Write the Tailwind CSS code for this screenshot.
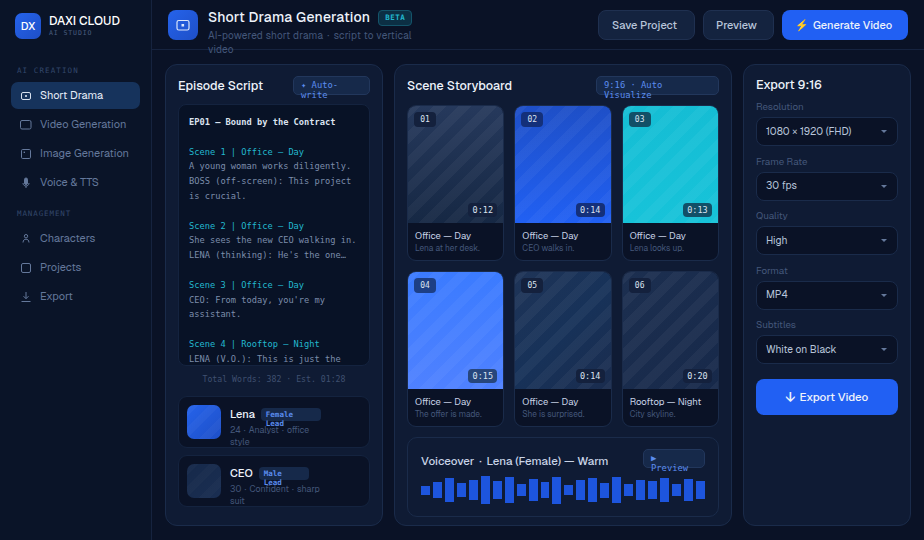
<!DOCTYPE html>
<html><head><meta charset="utf-8">
<script src="https://cdn.jsdelivr.net/npm/@tailwindcss/browser@4"></script>
</head>
<body class="m-0 bg-[#0a1226]">
<div class="w-[924px] h-[540px] overflow-hidden flex font-['Geist','Noto_Sans_CJK_SC',sans-serif] text-[#e6edf8] bg-[#0a1226]">
  <aside class="w-[152px] shrink-0 h-full bg-[#0a1428] border-r border-[#16233f] px-[11px] flex flex-col">
    <div class="flex gap-2 pl-1 pt-[13px] h-[50px] items-start">
      <div class="w-[26px] h-[26px] rounded-[7px] bg-gradient-to-br from-[#2563eb] to-[#1e4fc7] flex items-center justify-center text-[11px] font-medium text-white">DX</div>
      <div class="flex flex-col">
        <span class="text-[12px] leading-[14px] font-medium text-white mt-[1px]">DAXI CLOUD</span>
        <span class="font-['DejaVu_Sans_Mono',monospace] text-[6.5px] leading-[10px] tracking-[0.9px] text-[#4b5f80]">AI STUDIO</span>
      </div>
    </div>
    <div class="font-['DejaVu_Sans_Mono',monospace] text-[7.5px] leading-[10px] tracking-[1.1px] text-[#33476b] pl-[6px] mt-[16px] mb-[6px]">AI CREATION</div>
    <nav class="flex flex-col gap-[2px]">
      <div class="h-[27px] rounded-[7px] bg-[#16335c] flex items-center gap-[8px] px-[9px] text-[11px] text-[#e6edf8] whitespace-nowrap">
        <svg class="w-[12px] h-[12px] shrink-0 text-[#d7e0ee]" viewBox="0 0 12 12" fill="none" stroke="currentColor" stroke-width="1"><rect x="1.5" y="2.5" width="9" height="7" rx="1.5"/><rect x="5" y="5.2" width="2" height="1.6" fill="currentColor" stroke="none"/></svg>
        <span>Short Drama</span></div>
      <div class="h-[27px] rounded-[7px] flex items-center gap-[8px] px-[9px] text-[11px] text-[#64789b] whitespace-nowrap">
        <svg class="w-[12px] h-[12px] shrink-0" viewBox="0 0 12 12" fill="none" stroke="currentColor" stroke-width="1"><rect x="0.5" y="1.5" width="10.5" height="8.500" rx="1.5"/></svg>
        <span>Video Generation</span></div>
      <div class="h-[27px] rounded-[7px] flex items-center gap-[8px] px-[9px] text-[11px] text-[#64789b] whitespace-nowrap">
        <svg class="w-[12px] h-[12px] shrink-0" viewBox="0 0 12 12" fill="none" stroke="currentColor" stroke-width="1"><rect x="1.5" y="1.5" width="9" height="9" rx="1.2"/><rect x="3.6" y="3.6" width="1.4" height="1.4" fill="currentColor" stroke="none"/></svg>
        <span>Image Generation</span></div>
      <div class="h-[27px] rounded-[7px] flex items-center gap-[8px] px-[9px] text-[11px] text-[#64789b] whitespace-nowrap">
        <svg class="w-[12px] h-[12px] shrink-0" viewBox="0 0 12 12" fill="none" stroke="currentColor" stroke-width="1"><rect x="4.5" y="1" width="3" height="6.5" rx="1.5" fill="currentColor"/><path d="M3 6c0 4 6 4 6 0M6 9v2"/></svg>
        <span>Voice &amp; TTS</span></div>
    </nav>
    <div class="font-['DejaVu_Sans_Mono',monospace] text-[7.5px] leading-[10px] tracking-[0.9px] text-[#33476b] pl-[6px] mt-[13px] mb-[6px]">MANAGEMENT</div>
    <nav class="flex flex-col gap-[2px]">
      <div class="h-[27px] rounded-[7px] flex items-center gap-[8px] px-[9px] text-[11px] text-[#64789b]">
        <svg class="w-[12px] h-[12px] shrink-0" viewBox="0 0 12 12" fill="none" stroke="currentColor" stroke-width="1"><circle cx="6" cy="3.200" r="1.700"/><path d="M3 9.500c.2-2.400 1.300-3.300 3-3.300s2.800.9 3 3.300"/></svg>
        <span>Characters</span></div>
      <div class="h-[27px] rounded-[7px] flex items-center gap-[8px] px-[9px] text-[11px] text-[#64789b]">
        <svg class="w-[12px] h-[12px] shrink-0" viewBox="0 0 12 12" fill="none" stroke="currentColor" stroke-width="1"><rect x="1.500" y="1.500" width="9" height="9" rx="1.500"/></svg>
        <span>Projects</span></div>
      <div class="h-[27px] rounded-[7px] flex items-center gap-[8px] px-[9px] text-[11px] text-[#64789b]">
        <svg class="w-[12px] h-[12px] shrink-0" viewBox="0 0 12 12" fill="none" stroke="currentColor" stroke-width="1"><path d="M6 1v6.500M3.500 5.200 6 7.700l2.500-2.500M1.500 10.500h9"/></svg>
        <span>Export</span></div>
    </nav>
  </aside>
  <div class="flex-1 min-w-0 flex flex-col">
    <header class="h-[50px] shrink-0 border-b border-[#16233f] pl-[16px] pr-[16px] flex items-center">
      <div class="w-[30px] h-[30px] rounded-[8px] bg-gradient-to-br from-[#2563eb] to-[#1e4fc7] flex items-center justify-center shrink-0">
        <svg class="w-[16px] h-[16px] text-[#dbe6fb]" viewBox="0 0 16 16" fill="none" stroke="currentColor" stroke-width="1.200"><rect x="2" y="3.500" width="12" height="9.500" rx="1.800"/><rect x="6.500" y="7" width="2.600" height="2.500" fill="currentColor" stroke="none"/></svg>
      </div>
      <div class="ml-[10px] w-[218px] h-[30px] flex flex-col">
        <div class="flex items-center h-[16px]">
          <span class="text-[14px] font-medium tracking-[0.22px] text-[#eef3fb] whitespace-nowrap">Short Drama Generation</span>
          <span class="ml-[8px] h-[16px] px-[6px] rounded-[4px] bg-[#0c2f44] border border-[#14546a] font-['DejaVu_Sans_Mono',monospace] font-bold text-[7.5px] leading-[14px] tracking-[0.5px] text-[#22b8cf]">BETA</span>
        </div>
        <p class="mt-[3px] text-[10px] leading-[14px] tracking-[0.2px] text-[#44577a]">AI-powered short drama <span class="mx-[1.5px]">·</span> script to vertical video</p>
      </div>
      <div class="ml-auto flex gap-[8px]">
        <div class="w-[97px] h-[30px] rounded-[8px] bg-[#14233f] border border-[#1f3050] pt-[1px] pr-[4px] flex items-center justify-center text-[11px] font-medium text-[#b8c5da]">Save Project</div>
        <div class="w-[71px] h-[30px] rounded-[8px] bg-[#14233f] border border-[#1f3050] pt-[1px] pr-[4px] flex items-center justify-center text-[11px] font-medium text-[#b8c5da]">Preview</div>
        <div class="w-[126px] h-[30px] rounded-[8px] bg-[#2160f3] pt-[1px] pr-[3px] flex items-center justify-center gap-[4px] text-[11px] font-medium text-[#eef3fb]"><span class="text-[#d9a93a] text-[11px]">⚡</span><span>Generate Video</span></div>
      </div>
    </header>
    <main class="flex-1 min-h-0 pt-[14px] pl-[13px] pr-[13px] pb-[14px] grid grid-cols-[218px_338px_168px] gap-[11px] h-[490px]">
      <section class="rounded-[12px] bg-[#0f1b34] border border-[#1a2b4a] px-[12px] flex flex-col">
        <div class="flex items-center justify-between h-[39px] pt-[2px] shrink-0">
          <h2 class="text-[12.5px] font-medium text-[#eef3fb] mt-[2px]">Episode Script</h2>
          <div class="w-[77px] h-[19px] rounded-[5px] bg-[#16294a] border border-[#22375c] px-[7px] font-['DejaVu_Sans_Mono',monospace] text-[8.8px] leading-[10px] pt-[3px] text-[#5b8def]">✦ Auto-write</div>
        </div>
        <div class="h-[262px] shrink-0 rounded-[8px] bg-[#081226] border border-[#14233f] overflow-hidden pl-[10px] pt-[10px] pr-[4px] font-['DejaVu_Sans_Mono',monospace] text-[8.7px] leading-[14.8px] text-[#7c8dab] whitespace-pre-wrap"><div class="font-bold text-[#dbe3f0]">EP01 — Bound by the Contract</div>
<div class="text-[#22b8cf]">Scene 1 | Office — Day</div><div>A young woman works diligently.
BOSS (off-screen): This project is crucial.</div>
<div class="text-[#22b8cf]">Scene 2 | Office — Day</div><div>She sees the new CEO walking in.
LENA (thinking): He's the one…</div>
<div class="text-[#22b8cf]">Scene 3 | Office — Day</div><div>CEO: From today, you're my assistant.</div>
<div class="text-[#22b8cf]">Scene 4 | Rooftop — Night</div><div>LENA (V.O.): This is just the beginning.</div></div>
        <div class="text-center font-['DejaVu_Sans_Mono',monospace] text-[8.2px] leading-[12px] text-[#3f5070] mt-[7px]">Total Words: 382 · Est. 01:28</div>
        <div class="mt-[11px] h-[52px] rounded-[9px] bg-[#0a1226] border border-[#14233f] flex items-start pt-[8px] pl-[8px]">
          <div class="w-[34px] h-[34px] rounded-[7px] shrink-0 bg-[repeating-linear-gradient(135deg,rgba(255,255,255,0.03)_0_8px,transparent_8px_16px),linear-gradient(135deg,#2563eb,#1e4fc7)]"></div>
          <div class="ml-[9px] mt-[2px] w-[92px]">
            <div class="flex items-center h-[14px]"><span class="text-[11px] font-medium text-[#eef3fb] shrink-0">Lena</span><span class="ml-[6px] shrink-0 w-[60px] h-[13px] rounded-[4px] bg-[#16294a] pl-[5px] pr-[12px] font-['DejaVu_Sans_Mono',monospace] font-bold text-[7.5px] leading-[9px] pt-[2px] text-[#5b8def]">Female Lead</span></div>
            <div class="mt-[3px] text-[8.8px] leading-[12px] text-[#44577a]">24 <span class="mx-[1px]">·</span> Analyst <span class="mx-[1px]">·</span> office style</div>
          </div>
        </div>
        <div class="mt-[7px] h-[52px] rounded-[9px] bg-[#0a1226] border border-[#14233f] flex items-start pt-[8px] pl-[8px]">
          <div class="w-[34px] h-[34px] rounded-[7px] shrink-0 bg-[repeating-linear-gradient(135deg,rgba(255,255,255,0.02)_0_8px,transparent_8px_16px),linear-gradient(135deg,#16294a,#1a2e52)]"></div>
          <div class="ml-[9px] mt-[2px] w-[92px]">
            <div class="flex items-center h-[14px]"><span class="text-[11px] font-medium text-[#eef3fb] shrink-0">CEO</span><span class="ml-[6px] shrink-0 w-[50px] h-[13px] rounded-[4px] bg-[#16294a] pl-[5px] pr-[12px] font-['DejaVu_Sans_Mono',monospace] font-bold text-[7.5px] leading-[9px] pt-[2px] text-[#5b8def]">Male Lead</span></div>
            <div class="mt-[3px] text-[8.8px] leading-[12px] text-[#44577a]">30 <span class="mx-[1px]">·</span> Confident <span class="mx-[1px]">·</span> sharp suit</div>
          </div>
        </div>
      </section>
      <section class="rounded-[12px] bg-[#0f1b34] border border-[#1a2b4a] px-[12px] flex flex-col">
        <div class="flex items-center justify-between h-[40px] pt-[1px] pb-[1px] shrink-0">
          <h2 class="text-[12.5px] font-medium text-[#eef3fb] mt-[2px]">Scene Storyboard</h2>
          <div class="w-[123px] h-[19px] rounded-[5px] bg-[#16294a] border border-[#22375c] px-[7px] font-['DejaVu_Sans_Mono',monospace] text-[8.8px] leading-[10px] pt-[3px] text-[#5b8def]">9:16 · Auto Visualize</div>
        </div>
        <div class="grid grid-cols-3 gap-x-[10px] gap-y-[10px]">
          <div class="h-[156px] rounded-[9px] border border-[#1a2b4a] bg-[#0a1226] overflow-hidden flex flex-col">
            <div class="relative h-[117px] bg-[repeating-linear-gradient(135deg,rgba(255,255,255,0.04)_0_9px,transparent_9px_18px),linear-gradient(180deg,#26395c,#162844)]">
              <span class="absolute left-[6px] top-[6px] w-[22px] h-[15px] rounded-[4px] bg-[#14213d] text-center font-['DejaVu_Sans_Mono',monospace] text-[8px] leading-[15px] text-[#dbe3f0]">01</span>
              <span class="absolute right-[6px] bottom-[6px] w-[29px] h-[14px] rounded-[4px] bg-[#14213d] text-center font-['DejaVu_Sans_Mono',monospace] text-[8.500px] leading-[14px] text-[#dbe3f0]">0:12</span>
            </div>
            <div class="pl-[7px] pt-[6px]"><div class="text-[9.500px] leading-[13px] text-[#c8d3e6]">Office — Day</div><div class="text-[8.300px] leading-[11px] mt-[1px] text-[#44577a]">Lena at her desk.</div></div>
          </div>
          <div class="h-[156px] rounded-[9px] border border-[#1a2b4a] bg-[#0a1226] overflow-hidden flex flex-col">
            <div class="relative h-[117px] bg-[repeating-linear-gradient(135deg,rgba(255,255,255,0.04)_0_9px,transparent_9px_18px),linear-gradient(180deg,#1e4fc7,#2160f3)]">
              <span class="absolute left-[6px] top-[6px] w-[22px] h-[15px] rounded-[4px] bg-[#14307a] text-center font-['DejaVu_Sans_Mono',monospace] text-[8px] leading-[15px] text-[#dbe3f0]">02</span>
              <span class="absolute right-[6px] bottom-[6px] w-[29px] h-[14px] rounded-[4px] bg-[#14307a] text-center font-['DejaVu_Sans_Mono',monospace] text-[8.500px] leading-[14px] text-[#dbe3f0]">0:14</span>
            </div>
            <div class="pl-[7px] pt-[6px]"><div class="text-[9.500px] leading-[13px] text-[#c8d3e6]">Office — Day</div><div class="text-[8.300px] leading-[11px] mt-[1px] text-[#44577a]">CEO walks in.</div></div>
          </div>
          <div class="h-[156px] rounded-[9px] border border-[#1a2b4a] bg-[#0a1226] overflow-hidden flex flex-col">
            <div class="relative h-[117px] bg-[repeating-linear-gradient(135deg,rgba(255,255,255,0.04)_0_9px,transparent_9px_18px),linear-gradient(180deg,#15bdd4,#17c3d9)]">
              <span class="absolute left-[6px] top-[6px] w-[22px] h-[15px] rounded-[4px] bg-[#125068] text-center font-['DejaVu_Sans_Mono',monospace] text-[8px] leading-[15px] text-[#dbe3f0]">03</span>
              <span class="absolute right-[6px] bottom-[6px] w-[29px] h-[14px] rounded-[4px] bg-[#125068] text-center font-['DejaVu_Sans_Mono',monospace] text-[8.500px] leading-[14px] text-[#dbe3f0]">0:13</span>
            </div>
            <div class="pl-[7px] pt-[6px]"><div class="text-[9.500px] leading-[13px] text-[#c8d3e6]">Office — Day</div><div class="text-[8.300px] leading-[11px] mt-[1px] text-[#44577a]">Lena looks up.</div></div>
          </div>
          <div class="h-[156px] rounded-[9px] border border-[#1a2b4a] bg-[#0a1226] overflow-hidden flex flex-col">
            <div class="relative h-[117px] bg-[repeating-linear-gradient(135deg,rgba(255,255,255,0.04)_0_9px,transparent_9px_18px),linear-gradient(180deg,#3b7bff,#4f81ff)]">
              <span class="absolute left-[6px] top-[6px] w-[22px] h-[15px] rounded-[4px] bg-[#1d3f85] text-center font-['DejaVu_Sans_Mono',monospace] text-[8px] leading-[15px] text-[#dbe3f0]">04</span>
              <span class="absolute right-[6px] bottom-[6px] w-[29px] h-[14px] rounded-[4px] bg-[#27467c] text-center font-['DejaVu_Sans_Mono',monospace] text-[8.500px] leading-[14px] text-[#dbe3f0]">0:15</span>
            </div>
            <div class="pl-[7px] pt-[6px]"><div class="text-[9.500px] leading-[13px] text-[#c8d3e6]">Office — Day</div><div class="text-[8.300px] leading-[11px] mt-[1px] text-[#44577a]">The offer is made.</div></div>
          </div>
          <div class="h-[156px] rounded-[9px] border border-[#1a2b4a] bg-[#0a1226] overflow-hidden flex flex-col">
            <div class="relative h-[117px] bg-[repeating-linear-gradient(135deg,rgba(255,255,255,0.04)_0_9px,transparent_9px_18px),linear-gradient(135deg,#1f3457,#173259_50%,#1a2c4e)]">
              <span class="absolute left-[6px] top-[6px] w-[22px] h-[15px] rounded-[4px] bg-[#14213d] text-center font-['DejaVu_Sans_Mono',monospace] text-[8px] leading-[15px] text-[#dbe3f0]">05</span>
              <span class="absolute right-[6px] bottom-[6px] w-[29px] h-[14px] rounded-[4px] bg-[#14213d] text-center font-['DejaVu_Sans_Mono',monospace] text-[8.500px] leading-[14px] text-[#dbe3f0]">0:14</span>
            </div>
            <div class="pl-[7px] pt-[6px]"><div class="text-[9.500px] leading-[13px] text-[#c8d3e6]">Office — Day</div><div class="text-[8.300px] leading-[11px] mt-[1px] text-[#44577a]">She is surprised.</div></div>
          </div>
          <div class="h-[156px] rounded-[9px] border border-[#1a2b4a] bg-[#0a1226] overflow-hidden flex flex-col">
            <div class="relative h-[117px] bg-[repeating-linear-gradient(135deg,rgba(255,255,255,0.04)_0_9px,transparent_9px_18px),linear-gradient(135deg,#1c2f50,#17294a)]">
              <span class="absolute left-[6px] top-[6px] w-[22px] h-[15px] rounded-[4px] bg-[#14213d] text-center font-['DejaVu_Sans_Mono',monospace] text-[8px] leading-[15px] text-[#dbe3f0]">06</span>
              <span class="absolute right-[6px] bottom-[6px] w-[29px] h-[14px] rounded-[4px] bg-[#14213d] text-center font-['DejaVu_Sans_Mono',monospace] text-[8.500px] leading-[14px] text-[#dbe3f0]">0:20</span>
            </div>
            <div class="pl-[7px] pt-[6px]"><div class="text-[9.500px] leading-[13px] text-[#c8d3e6]">Rooftop — Night</div><div class="text-[8.300px] leading-[11px] mt-[1px] text-[#44577a]">City skyline.</div></div>
          </div>
        </div>
        <div class="mt-[10px] h-[80px] rounded-[10px] bg-[#0f1b34] border border-[#1a2b4a] px-[13px] pt-[11px]">
          <div class="flex items-center justify-between h-[19px]">
            <span class="text-[11.5px] font-medium text-[#c8d3e6] mt-[4px]">Voiceover <span class="mx-[2px]">·</span> Lena (Female) — Warm</span>
            <div class="w-[62px] h-[19px] rounded-[5px] bg-[#16294a] border border-[#22375c] px-[7px] font-['DejaVu_Sans_Mono',monospace] text-[8.800px] leading-[10px] pt-[3px] text-[#5b8def]">▶ Preview</div>
          </div>
          <div class="mt-[8px] flex items-center gap-[3px] h-[28px]">
            <i class="block w-[9px] h-[9px] bg-[#1d55dd]"></i><i class="block w-[9px] h-[16px] bg-[#1d55dd]"></i><i class="block w-[9px] h-[24px] bg-[#1d55dd]"></i><i class="block w-[9px] h-[14px] bg-[#1d55dd]"></i><i class="block w-[9px] h-[20px] bg-[#1d55dd]"></i><i class="block w-[9px] h-[28px] bg-[#1d55dd]"></i><i class="block w-[9px] h-[18px] bg-[#1d55dd]"></i><i class="block w-[9px] h-[26px] bg-[#1d55dd]"></i><i class="block w-[9px] h-[12px] bg-[#1d55dd]"></i><i class="block w-[9px] h-[22px] bg-[#1d55dd]"></i><i class="block w-[9px] h-[16px] bg-[#1d55dd]"></i><i class="block w-[9px] h-[27px] bg-[#1d55dd]"></i><i class="block w-[9px] h-[10px] bg-[#1d55dd]"></i><i class="block w-[9px] h-[20px] bg-[#1d55dd]"></i><i class="block w-[9px] h-[24px] bg-[#1d55dd]"></i><i class="block w-[9px] h-[15px] bg-[#1d55dd]"></i><i class="block w-[9px] h-[26px] bg-[#1d55dd]"></i><i class="block w-[9px] h-[12px] bg-[#1d55dd]"></i><i class="block w-[9px] h-[20px] bg-[#1d55dd]"></i><i class="block w-[9px] h-[18px] bg-[#1d55dd]"></i><i class="block w-[9px] h-[24px] bg-[#1d55dd]"></i><i class="block w-[9px] h-[12px] bg-[#1d55dd]"></i><i class="block w-[9px] h-[22px] bg-[#1d55dd]"></i><i class="block w-[9px] h-[18px] bg-[#1d55dd]"></i>
          </div>
        </div>
      </section>
      <section class="rounded-[12px] bg-[#0f1b34] border border-[#1a2b4a] px-[12px] pt-[12px] flex flex-col">
        <h2 class="text-[12.500px] leading-[16px] font-medium text-[#eef3fb]">Export 9:16</h2>
        <div class="mt-[8px] flex flex-col gap-[9.5px]">
          <div><div class="text-[9.800px] leading-[12px] text-[#44577a]">Resolution</div><div class="mt-[4px] h-[29px] rounded-[8px] bg-[#0a1226] border border-[#1a2b4a] pl-[9px] pr-[10px] flex items-center justify-between text-[10.250px] text-[#b8c5da]"><span>1080 × 1920 (FHD)</span><i class="block w-0 h-0 border-x-[3px] border-t-[3px] border-x-transparent border-t-[#64789b]"></i></div></div>
          <div><div class="text-[9.800px] leading-[12px] text-[#44577a]">Frame Rate</div><div class="mt-[4px] h-[29px] rounded-[8px] bg-[#0a1226] border border-[#1a2b4a] pl-[9px] pr-[10px] flex items-center justify-between text-[10.250px] text-[#b8c5da]"><span>30 fps</span><i class="block w-0 h-0 border-x-[3px] border-t-[3px] border-x-transparent border-t-[#64789b]"></i></div></div>
          <div><div class="text-[9.800px] leading-[12px] text-[#44577a]">Quality</div><div class="mt-[4px] h-[29px] rounded-[8px] bg-[#0a1226] border border-[#1a2b4a] pl-[9px] pr-[10px] flex items-center justify-between text-[10.250px] text-[#b8c5da]"><span>High</span><i class="block w-0 h-0 border-x-[3px] border-t-[3px] border-x-transparent border-t-[#64789b]"></i></div></div>
          <div><div class="text-[9.800px] leading-[12px] text-[#44577a]">Format</div><div class="mt-[4px] h-[29px] rounded-[8px] bg-[#0a1226] border border-[#1a2b4a] pl-[9px] pr-[10px] flex items-center justify-between text-[10.250px] text-[#b8c5da]"><span>MP4</span><i class="block w-0 h-0 border-x-[3px] border-t-[3px] border-x-transparent border-t-[#64789b]"></i></div></div>
          <div><div class="text-[9.800px] leading-[12px] text-[#44577a]">Subtitles</div><div class="mt-[4px] h-[29px] rounded-[8px] bg-[#0a1226] border border-[#1a2b4a] pl-[9px] pr-[10px] flex items-center justify-between text-[10.250px] text-[#b8c5da]"><span>White on Black</span><i class="block w-0 h-0 border-x-[3px] border-t-[3px] border-x-transparent border-t-[#64789b]"></i></div></div>
        </div>
        <div class="mt-[15px] h-[36px] rounded-[8px] bg-[#2160f3] flex items-center justify-center gap-[4px] text-[11.500px] font-medium text-[#eef3fb]"><span class="text-[14px] leading-none">↓</span><span>Export Video</span></div>
      </section>
    </main>
  </div>
</div>
</body></html>
